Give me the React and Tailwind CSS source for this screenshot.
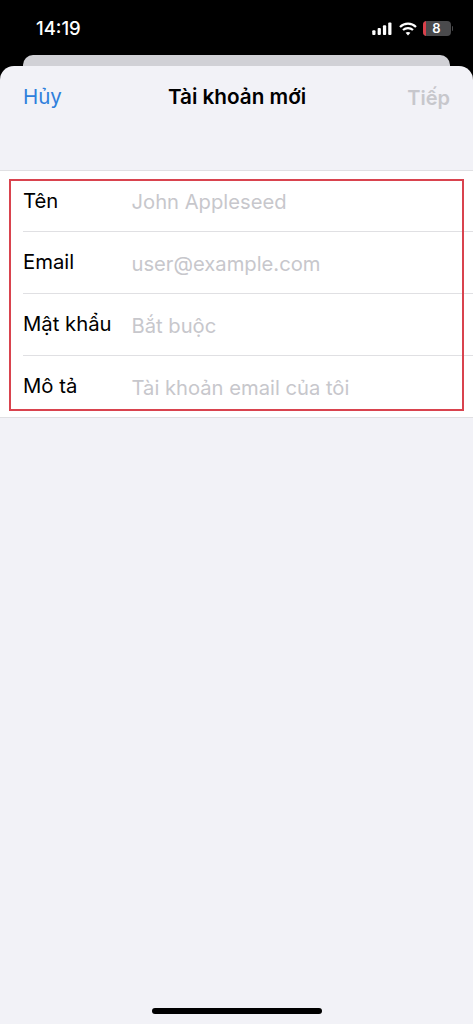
import React from "react";

const font = { fontFamily: '"Inter", "Liberation Sans", sans-serif' };

const rows = [
  { label: "Tên", hint: "John Appleseed" },
  { label: "Email", hint: "user@example.com" },
  { label: "Mật khẩu", hint: "Bắt buộc" },
  { label: "Mô tả", hint: "Tài khoản email của tôi" },
];

function StatusIcons() {
  return (
    <div className="flex items-center gap-[6px]">
      <svg width="22" height="13" viewBox="0 0 21 14" fill="#fff">
        <rect x="0" y="9" width="3.5" height="5" rx="1" />
        <rect x="5.8" y="6.5" width="3.5" height="7.5" rx="1" />
        <rect x="11.5" y="3.5" width="3.5" height="10.5" rx="1" />
        <rect x="17.2" y="0.5" width="3.5" height="13.5" rx="1" />
      </svg>
      <svg width="18" height="14" viewBox="0 0 18 14" fill="none" stroke="#fff" strokeWidth="2.2">
        <path d="M1 5 C5.5 0.5 12.5 0.5 17 5" />
        <path d="M4 8 C6.8 5.4 11.2 5.4 14 8" />
        <path d="M9 13.6 L6.6 10.8 C8 9.6 10 9.6 11.4 10.8 Z" fill="#fff" stroke="none" />
      </svg>
      <div className="flex items-center">
        <div className="relative w-[28px] h-[15px] rounded-[4px] bg-[#4a4a4c] overflow-hidden flex items-center justify-center">
          <div className="absolute left-0 top-0 bottom-0 w-[3px] bg-[#d9404a]" />
          <span className="text-white text-[13px] font-semibold leading-none">8</span>
        </div>
        <div className="w-[1.5px] h-[5px] bg-[#4a4a4c] ml-[1px] rounded-r" />
      </div>
    </div>
  );
}

export default function App() {
  return (
    <div className="w-[473px] h-[1024px] bg-black flex flex-col overflow-hidden" style={font}>
      {/* status bar */}
      <div className="h-[55px] shrink-0 flex justify-between pl-[36px] pr-[20px] pt-[17px] items-start">
        <span className="text-white text-[18.5px] font-medium leading-[22px]">14:19</span>
        <div className="pt-[4px]">
          <StatusIcons />
        </div>
      </div>

      {/* card behind the sheet */}
      <div className="h-[20px] -mb-[9px] shrink-0 mx-[23px] bg-[#d1d1d6] rounded-t-[10px]" />

      <div className="relative z-10 flex-1 bg-[#f2f2f7] rounded-t-[14px] flex flex-col">
        <div className="h-[62px] pt-[1px] flex items-center justify-between px-[23px]">
          <span className="text-[#2f80dc] text-[20.5px] leading-none">Hủy</span>
          <span className="ml-[5px] text-black text-[20.7px] font-semibold leading-none">Tài khoản mới</span>
          <span className="text-[#c7c7cc] text-[20px] font-semibold leading-none">Tiếp</span>
        </div>

        <div className="relative mt-[42px] bg-white border-y border-[#e0e0e3]">
          {rows.map((row, i) => (
            <div
              key={row.label}
              className={
                "ml-[23px] flex items-center " +
                (i === 0 ? "h-[61px] border-b border-[#e0e0e3]" : i < rows.length - 1 ? "h-[62px] border-b border-[#e0e0e3]" : "h-[61px]")
              }
            >
              <span className="w-[108.5px] text-black text-[20.3px] leading-none">{row.label}</span>
              <span className="mt-[3px] text-[#c7c7cc] text-[20.2px] leading-none">{row.hint}</span>
            </div>
          ))}
          {/* red highlight box */}
          <div className="absolute left-[9px] top-[8px] w-[455px] h-[232px] border-2 border-[#d9434e]" />
        </div>

        <div className="absolute bottom-[10px] left-[152px] w-[170px] h-[6px] rounded-full bg-black" />
      </div>
    </div>
  );
}
